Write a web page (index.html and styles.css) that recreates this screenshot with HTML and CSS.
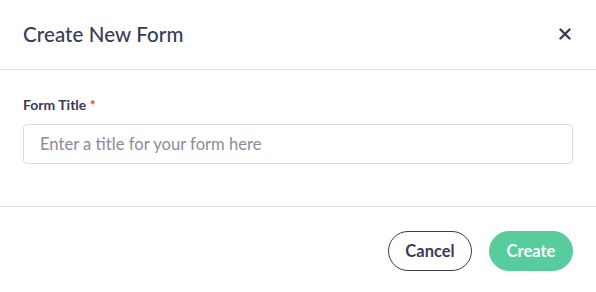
FILE: index.html
```html
<!DOCTYPE html>
<html>
<head>
<meta charset="utf-8">
<link rel="stylesheet" href="styles.css">
</head>
<body>
<div class="modal">
  <div class="modal-header">
    <h2 class="modal-title">Create New Form</h2>
    <button class="close-btn" aria-label="Close">
      <svg width="12" height="12" viewBox="0 0 12 12"><path d="M1.5 1.5L10.5 10.5M10.5 1.5L1.5 10.5" stroke="#3b3a58" stroke-width="2.4" stroke-linecap="round"/></svg>
    </button>
  </div>
  <div class="modal-body">
    <label class="field-label">Form Title <span class="req">*</span></label>
    <input class="text-input" type="text" placeholder="Enter a title for your form here">
  </div>
  <div class="modal-footer">
    <button class="btn btn-outline">Cancel</button>
    <button class="btn btn-primary">Create</button>
  </div>
</div>
</body>
</html>
```
FILE: styles.css
```css
* { box-sizing: border-box; }
html, body { margin: 0; padding: 0; background: #fff; }
body { font-family: Lato, "Open Sans", sans-serif; color: #3b3a58; }
.modal { width: 596px; height: 292px; display: flex; flex-direction: column; }
.modal-header {
  height: 70px;
  border-bottom: 1px solid #e0dfe6;
  display: flex;
  align-items: center;
  justify-content: space-between;
  padding: 0 23px 2px 23px;
}
.modal-title { margin: 0; font-size: 20.5px; font-weight: 500; color: #3b3a58; letter-spacing: 0.1px; }
.close-btn { border: 0; background: none; padding: 0; display: flex; margin-right: 2px; cursor: pointer; }
.modal-body {
  height: 137px;
  border-bottom: 1px solid #e0dfe6;
  padding: 26px 23px 0 23px;
  display: flex;
  flex-direction: column;
}
.field-label { font-size: 14px; line-height: 17px; font-weight: 700; color: #3b3a58; margin-bottom: 11px; }
.req { color: #e0424b; }
.text-input {
  height: 40px;
  width: 550px;
  border: 1px solid #dcdbe3;
  border-radius: 4px;
  padding: 0 16px;
  font-family: Lato, "Open Sans", sans-serif;
  font-size: 16.6px;
  color: #3b3a58;
  outline: none;
}
.text-input::placeholder { color: #8c8b9c; }
.modal-footer {
  flex: 1;
  display: flex;
  justify-content: flex-end;
  align-items: flex-start;
  gap: 17px;
  padding: 24px 23px 0 0;
}
.btn {
  height: 40px;
  width: 84px;
  border-radius: 20px;
  font-family: Lato, "Open Sans", sans-serif;
  font-size: 16.5px;
  font-weight: 700;
  cursor: pointer;
}
.btn-outline { background: #fff; border: 1px solid #3b3a58; color: #3b3a58; }
.btn-primary { background: #57cc9c; border: 1px solid #57cc9c; color: #fff; }
```
